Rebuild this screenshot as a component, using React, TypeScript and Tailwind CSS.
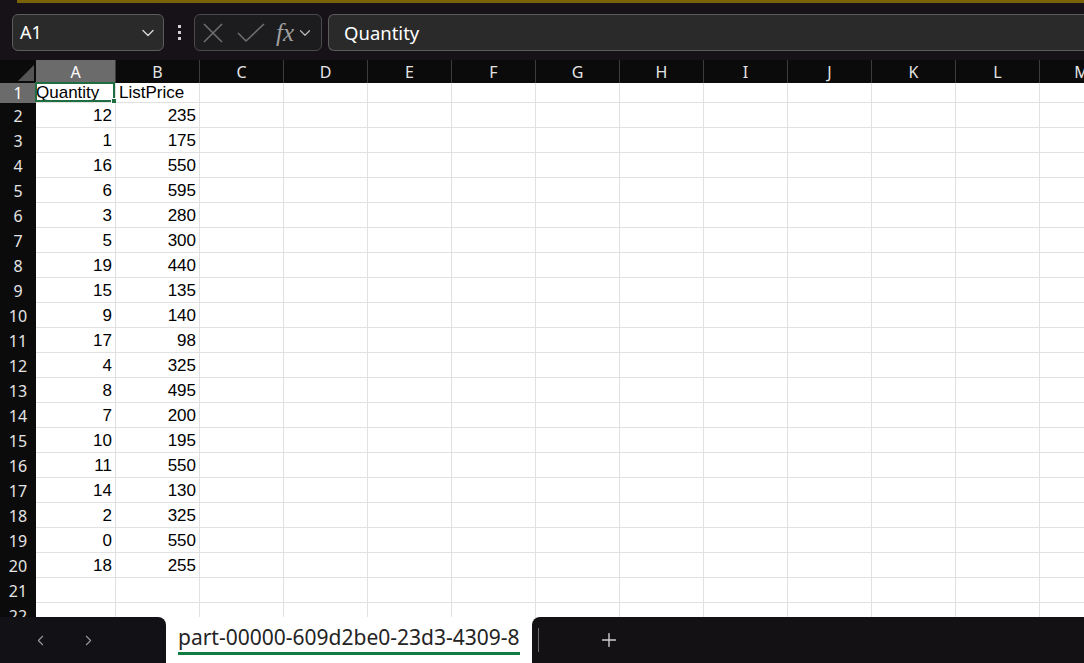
import { ChevronDown, ChevronLeft, ChevronRight, Plus } from "lucide-react";

const cols = ["A", "B", "C", "D", "E", "F", "G", "H", "I", "J", "K", "L", "M"];

const data: [number, number][] = [
  [12, 235],
  [1, 175],
  [16, 550],
  [6, 595],
  [3, 280],
  [5, 300],
  [19, 440],
  [15, 135],
  [9, 140],
  [17, 98],
  [4, 325],
  [8, 495],
  [7, 200],
  [10, 195],
  [11, 550],
  [14, 130],
  [2, 325],
  [0, 550],
  [18, 255],
];

const colWidth = (i: number) => (i === 0 ? "w-[80px]" : "w-[84px]");

const Toolbar = () => (
  <div className="h-[57px] flex items-start pt-[11px] pl-[12px] font-['Noto_Sans',sans-serif]">
    <div className="w-[152px] h-[37px] shrink-0 rounded-[6px] border border-[#5c5c5c] bg-[#2a2a2a] flex items-center justify-between pl-[7px] pr-[5px]">
      <span className="text-[18px] text-white">A1</span>
      <ChevronDown size={20} strokeWidth={1.6} className="text-[#d8d8d8]" />
    </div>
    <div className="w-[30px] h-[37px] shrink-0 flex flex-col items-center justify-center gap-[3px]">
      <div className="w-[3px] h-[3px] bg-[#d0d0d0]" />
      <div className="w-[3px] h-[3px] bg-[#d0d0d0]" />
      <div className="w-[3px] h-[3px] bg-[#d0d0d0]" />
    </div>
    <div className="w-[128px] h-[37px] shrink-0 rounded-[6px] border border-[#4a4a4a] bg-[#1c1c1e] flex items-center pl-[7px]">
      <svg width="22" height="22" viewBox="0 0 22 22" className="text-[#6e6e6e]">
        <path d="M2 2L20 20M20 2L2 20" stroke="currentColor" strokeWidth="1.6" fill="none" />
      </svg>
      <svg width="28" height="22" viewBox="0 0 28 22" className="text-[#6e6e6e] ml-[13px]">
        <path d="M1 11L9 19L27 2" stroke="currentColor" strokeWidth="1.6" fill="none" />
      </svg>
      <span className="ml-[11px] text-[25px] italic text-[#a0a0a0] font-['Liberation_Serif',serif] leading-none">
        fx
      </span>
      <ChevronDown size={18} strokeWidth={1.6} className="text-[#b8b8b8] ml-[2px]" />
    </div>
    <div className="ml-[6px] flex-1 h-[37px] rounded-l-[6px] border border-r-0 border-[#5c5c5c] bg-[#2a2a2a] flex items-center pl-[15px]">
      <span className="text-[18.5px] text-white">Quantity</span>
    </div>
  </div>
);

const HeaderRow = () => (
  <div className="flex h-[23px] bg-[#0b0b0b] font-['Noto_Sans',sans-serif] text-[16px]">
    <div className="w-[36px] shrink-0 relative bg-[#0b0b0b]">
      <div className="absolute right-[2px] bottom-[2px] w-0 h-0 border-l-[16px] border-l-transparent border-b-[16px] border-b-[#555555]" />
    </div>
    {cols.map((c, i) => (
      <div
        key={c}
        className={`${colWidth(i)} shrink-0 flex items-center justify-center border-r border-[#3c3c3c] ${
          i === 0 ? "bg-[#6b6b6b] text-white" : "text-[#e4e4e4]"
        }`}
      >
        {c}
      </div>
    ))}
  </div>
);

const Row = ({ n, a, b, h }: { n: number; a?: string; b?: string; h: string }) => (
  <div className={`flex ${h} font-['Liberation_Sans',sans-serif] text-[17px] text-black`}>
    <div
      className={`w-[36px] shrink-0 flex items-center justify-center font-['Noto_Sans',sans-serif] text-[16px] ${
        n === 1 ? "bg-[#6b6b6b] text-white" : "bg-[#0b0b0b] text-[#e4e4e4]"
      }`}
    >
      {n}
    </div>
    {cols.map((c, i) => {
      const v = i === 0 ? a : i === 1 ? b : undefined;
      return (
        <div
          key={c}
          className={`${colWidth(i)} shrink-0 bg-white border-r border-b border-[#e1e1e1] flex items-center relative whitespace-nowrap ${
            n === 1 ? (i === 0 ? "justify-start" : "justify-start pl-[3px]") : "justify-end pr-[3px] pt-[2px]"
          }`}
        >
          {v}
          {n === 1 && i === 0 && (
            <div className="absolute -left-[1px] -top-[1px] right-0 bottom-0 border-2 border-[#1e6e42]">
              <div className="absolute -right-[4px] -bottom-[4px] w-[6px] h-[6px] bg-[#1e6e42] border border-white" />
            </div>
          )}
        </div>
      );
    })}
  </div>
);

const TabBar = () => (
  <div className="absolute left-0 right-0 bottom-0 h-[46px] flex font-['Noto_Sans',sans-serif]">
    <div className="w-[166px] shrink-0 bg-[#121216] rounded-tr-[8px] flex items-center pl-[32px] gap-[31px] text-[#9a9a9a]">
      <ChevronLeft size={17} strokeWidth={1.5} />
      <ChevronRight size={17} strokeWidth={1.5} />
    </div>
    <div className="w-[366px] shrink-0 bg-white flex flex-col items-start pl-[12px] pt-[5px]">
      <span className="text-[21px] text-[#242424] leading-[30px]">part-00000-609d2be0-23d3-4309-8</span>
      <div className="w-[342px] h-[3px] bg-[#107c41]" />
    </div>
    <div className="flex-1 bg-[#141114] rounded-tl-[8px] flex items-center">
      <div className="ml-[6px] w-px h-[24px] bg-[#6a6a6a]" />
      <Plus size={22} strokeWidth={1.5} className="text-[#d0d0d0] ml-[59px]" />
    </div>
  </div>
);

export default function App() {
  return (
    <div className="w-[1084px] h-[663px] overflow-hidden relative bg-[#161218]">
      <div className="ml-[17px] h-[3px] bg-[#7a6208]" />
      <Toolbar />
      <HeaderRow />
      <Row n={1} a="Quantity" b="ListPrice" h="h-[20px]" />
      {data.map(([a, b], i) => (
        <Row key={i} n={i + 2} a={String(a)} b={String(b)} h="h-[25px]" />
      ))}
      <Row n={21} h="h-[25px]" />
      <Row n={22} h="h-[25px]" />
      <TabBar />
    </div>
  );
}
